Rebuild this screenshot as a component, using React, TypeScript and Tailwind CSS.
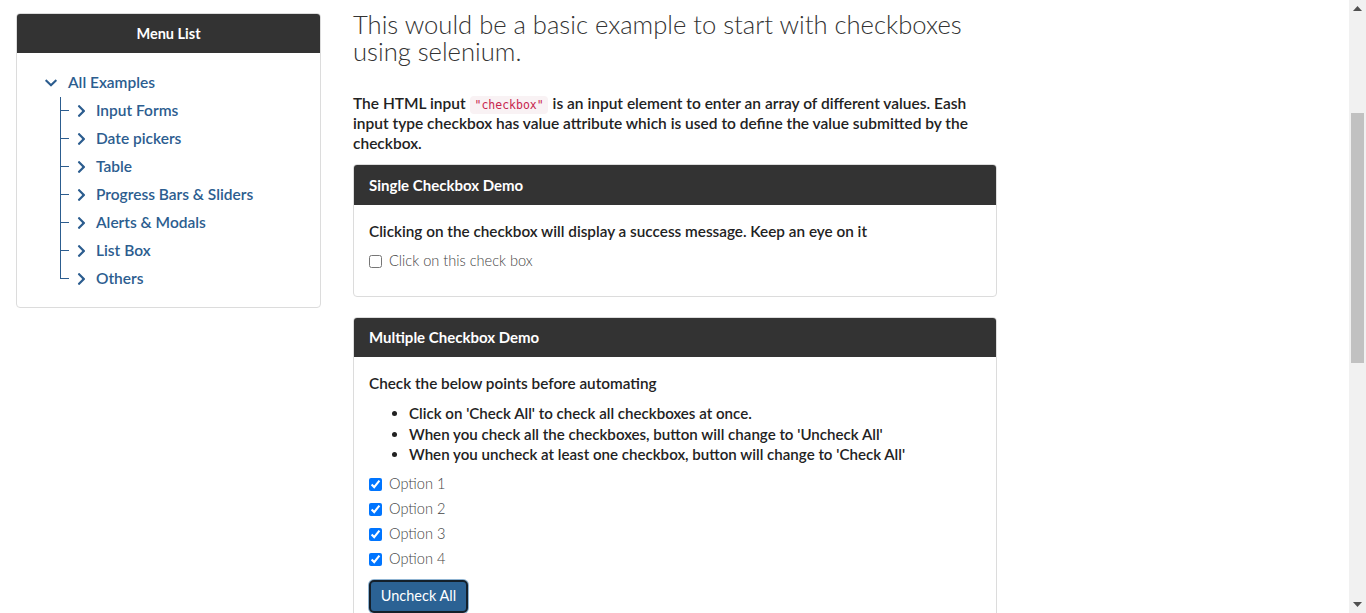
import React from "react";
import { FaChevronDown, FaChevronRight } from "react-icons/fa";

const items = [
  "Input Forms",
  "Date pickers",
  "Table",
  "Progress Bars & Sliders",
  "Alerts & Modals",
  "List Box",
  "Others",
];

function TreeChild({ label, last }: { label: string; last: boolean }) {
  return (
    <div className="flex h-[28px] items-stretch">
      <div className="flex w-[9px] flex-col">
        <div className="h-[14px] border-b border-l border-[#2c5d8f]" />
        <div className={last ? "flex-1" : "flex-1 border-l border-[#2c5d8f]"} />
      </div>
      <div className="ml-[8px] flex items-center">
        <FaChevronRight className="h-[14px] w-[9px] text-[#2c5d8f]" />
      </div>
      <span className="ml-[10px] flex items-center text-[15.5px] font-semibold text-[#2c5d8f]">{label}</span>
    </div>
  );
}

function Scrollbar() {
  return (
    <div className="flex h-[613px] w-[17px] shrink-0 flex-col items-center bg-[#f1f1f1]">
      <div className="flex h-[17px] w-full items-center justify-center">
        <svg width="9" height="5" viewBox="0 0 9 5">
          <path d="M0 5 L4.5 0 L9 5 Z" fill="#505050" />
        </svg>
      </div>
      <div className="flex w-full flex-1 flex-col items-center">
        <div className="h-[96px]" />
        <div className="h-[250px] w-[13px] bg-[#c1c1c1]" />
      </div>
      <div className="flex h-[17px] w-full items-center justify-center">
        <svg width="9" height="5" viewBox="0 0 9 5">
          <path d="M0 0 L9 0 L4.5 5 Z" fill="#505050" />
        </svg>
      </div>
    </div>
  );
}

export default function App() {
  return (
    <div className="flex h-[613px] overflow-hidden bg-white font-['Lato',sans-serif] text-[#222]">
      <div className="flex flex-1 items-start gap-[32px] pl-[16px] pt-[13px]">
        <aside className="w-[305px] shrink-0 overflow-hidden rounded-[4px] border border-[#dcdcdc]">
          <div className="flex h-[39px] items-center justify-center bg-[#333333] text-[14.5px] font-bold text-white">
            Menu List
          </div>
          <div className="pb-[14px] pl-[28px] pt-[16px]">
            <div className="flex h-[28px] items-center">
              <FaChevronDown className="h-[14px] w-[12px] text-[#2c5d8f]" />
              <span className="ml-[11px] text-[15.5px] font-semibold text-[#2c5d8f]">All Examples</span>
            </div>
            <div className="ml-[15px]">
              {items.map((it, i) => (
                <TreeChild key={it} label={it} last={i === items.length - 1} />
              ))}
            </div>
          </div>
        </aside>

        <main className="w-[644px] shrink-0">
          <h1 className="-mt-[2px] text-[25.6px] font-light leading-[27px] text-[#333]">
            This would be a basic example to start with checkboxes using selenium.
          </h1>
          <p className="mt-[28px] text-[15.5px] font-semibold leading-[20px] text-[#222]">
            The HTML input{" "}
            <code className="mx-[1px] rounded-[4px] bg-[#f9f2f4] px-[4px] py-[2px] font-['DejaVu_Sans_Mono',monospace] text-[11.5px] font-normal leading-none text-[#c7254e]">
              "checkbox"
            </code>{" "}
            is an input element to enter an array of different values. Eash input type checkbox has value attribute
            which is used to define the value submitted by the checkbox.
          </p>

          <section className="mt-[11px] overflow-hidden rounded-[4px] border border-[#dcdcdc]">
            <div className="flex h-[40px] items-center bg-[#333333] px-[15px] text-[15px] font-bold text-white">
              Single Checkbox Demo
            </div>
            <div className="px-[15px] pb-[25px] pt-[16px]">
              <p className="text-[15.3px] font-semibold leading-[20px] text-[#222]">
                Clicking on the checkbox will display a success message. Keep an eye on it
              </p>
              <label className="mt-[10px] flex h-[20px] items-center gap-[7px]">
                <input type="checkbox" className="m-0 h-[13px] w-[13px]" />
                <span className="text-[14.6px] font-light text-[#444]">Click on this check box</span>
              </label>
            </div>
          </section>

          <section className="mt-[20px] overflow-hidden rounded-t-[4px] border border-[#dcdcdc]">
            <div className="flex h-[39px] items-center bg-[#333333] px-[15px] text-[15px] font-bold text-white">
              Multiple Checkbox Demo
            </div>
            <div className="px-[15px] pb-[40px] pt-[16px]">
              <p className="text-[15.3px] font-semibold leading-[20px] text-[#222]">
                Check the below points before automating
              </p>
              <ul className="mt-[10px] list-disc pl-[40px] text-[15.1px] font-semibold leading-[20.5px] text-[#222]">
                <li>Click on 'Check All' to check all checkboxes at once.</li>
                <li>When you check all the checkboxes, button will change to 'Uncheck All'</li>
                <li>When you uncheck at least one checkbox, button will change to 'Check All'</li>
              </ul>
              <div className="mt-[7px] flex flex-col">
                {["Option 1", "Option 2", "Option 3", "Option 4"].map((o) => (
                  <label key={o} className="flex h-[25px] items-center gap-[7px]">
                    <input type="checkbox" defaultChecked className="m-0 h-[13px] w-[13px]" />
                    <span className="text-[14.6px] font-light text-[#444]">{o}</span>
                  </label>
                ))}
              </div>
              <button className="mt-[8px] h-[33px] w-[99px] rounded-[5px] border-2 border-[#14202b] bg-[#2b6294] text-[14.5px] text-white shadow-[0_0_0_1px_#8fb3d1]">
                Uncheck All
              </button>
            </div>
          </section>
        </main>
      </div>
      <Scrollbar />
    </div>
  );
}
